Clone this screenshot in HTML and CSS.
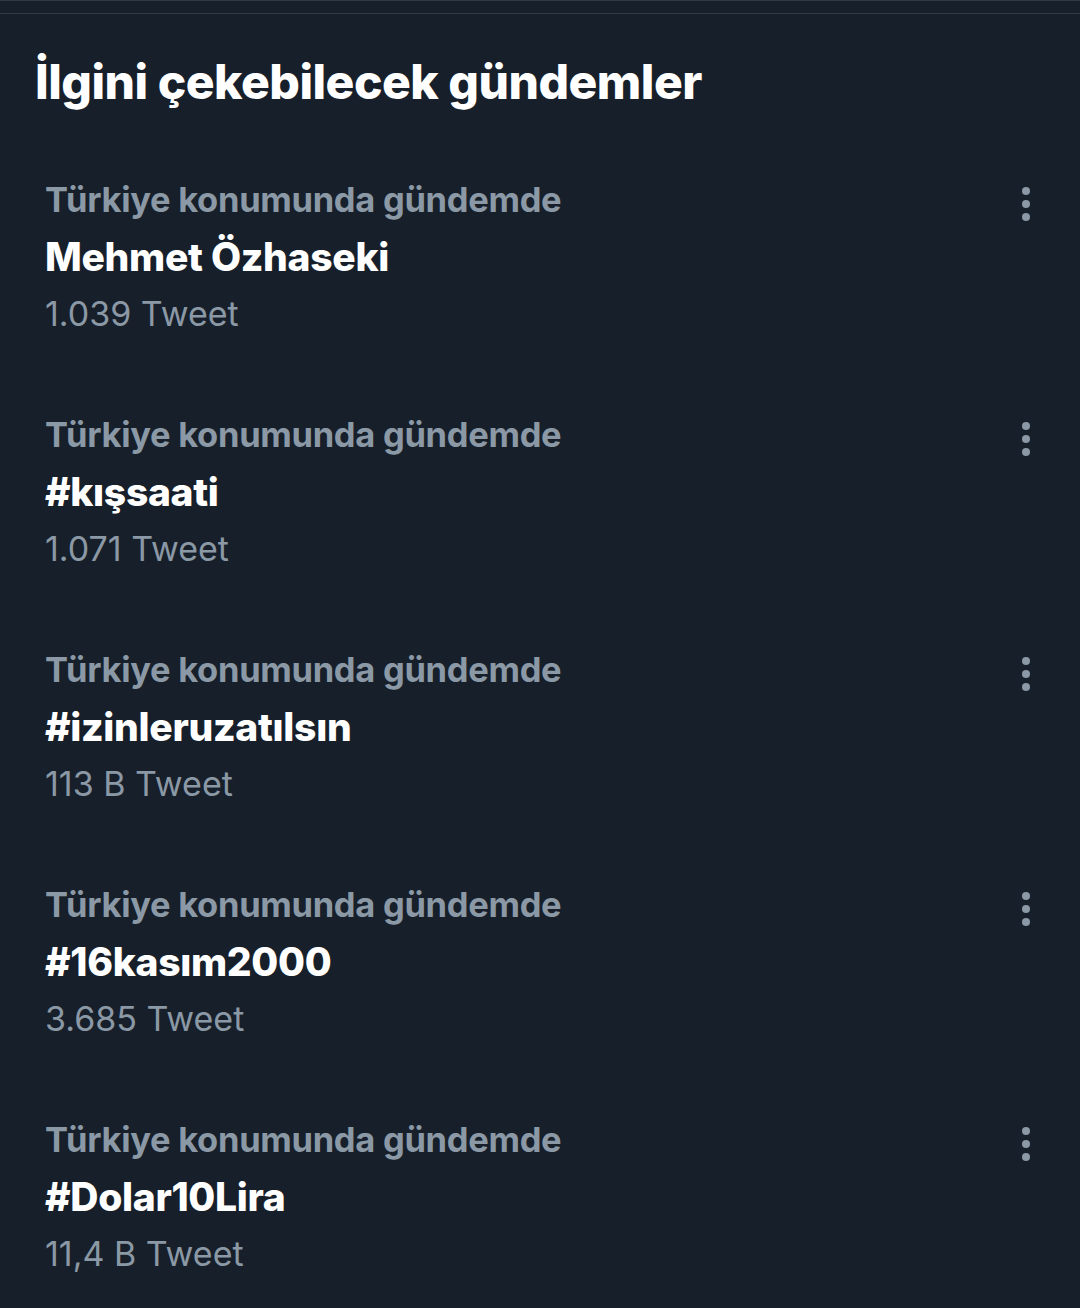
FILE: index.html
```html
<!DOCTYPE html>
<html lang="tr">
<head>
  <meta charset="UTF-8">
  <meta name="viewport" content="width=device-width, initial-scale=1.0">
  <title>Gündemler</title>
  <link rel="stylesheet" href="styles.css">
</head>
<body>
  <main class="panel">
    <div class="topbar"></div>
    <h1 class="title">İlgini çekebilecek gündemler</h1>

    <ul class="trends">
      <li class="trend">
        <div class="trend-text">
          <p class="trend-where">Türkiye konumunda gündemde</p>
          <p class="trend-name">Mehmet Özhaseki</p>
          <p class="trend-count">1.039 Tweet</p>
        </div>
        <button class="more" aria-label="Daha fazla"><span></span><span></span><span></span></button>
      </li>
      <li class="trend">
        <div class="trend-text">
          <p class="trend-where">Türkiye konumunda gündemde</p>
          <p class="trend-name">#kışsaati</p>
          <p class="trend-count">1.071 Tweet</p>
        </div>
        <button class="more" aria-label="Daha fazla"><span></span><span></span><span></span></button>
      </li>
      <li class="trend">
        <div class="trend-text">
          <p class="trend-where">Türkiye konumunda gündemde</p>
          <p class="trend-name">#izinleruzatılsın</p>
          <p class="trend-count">113 B Tweet</p>
        </div>
        <button class="more" aria-label="Daha fazla"><span></span><span></span><span></span></button>
      </li>
      <li class="trend">
        <div class="trend-text">
          <p class="trend-where">Türkiye konumunda gündemde</p>
          <p class="trend-name">#16kasım2000</p>
          <p class="trend-count">3.685 Tweet</p>
        </div>
        <button class="more" aria-label="Daha fazla"><span></span><span></span><span></span></button>
      </li>
      <li class="trend">
        <div class="trend-text">
          <p class="trend-where">Türkiye konumunda gündemde</p>
          <p class="trend-name">#Dolar10Lira</p>
          <p class="trend-count">11,4 B Tweet</p>
        </div>
        <button class="more" aria-label="Daha fazla"><span></span><span></span><span></span></button>
      </li>
    </ul>
  </main>
</body>
</html>
```

FILE: styles.css
```css
:root {
  --clr-bg: #17202a;
  --clr-line: #2f3a44;
  --clr-text: #ffffff;
  --clr-muted: #8b98a5;
}

* {
  padding: 0;
  margin: 0;
  box-sizing: border-box;
}

html, body {
  height: 100%;
}

body {
  background-color: var(--clr-bg);
  color: var(--clr-text);
  font-family: Inter, "Liberation Sans", sans-serif;
}

.panel {
  min-height: 100%;
}

.topbar {
  height: 14px;
  border-top: 1px solid var(--clr-line);
  border-bottom: 1px solid var(--clr-line);
}

.title {
  font-size: 48px;
  font-weight: 800;
  line-height: 1;
  padding: 44px 0 0 35px;
  letter-spacing: -0.5px;
}

.trends {
  list-style: none;
  padding-top: 65px;
}

.trend {
  display: flex;
  justify-content: space-between;
  align-items: flex-start;
  padding: 0 40px 0 45px;
  height: 235px;
}

.trend-text p {
  line-height: 57px;
  white-space: nowrap;
}

.trend-where {
  font-size: 34.5px;
  font-weight: 700;
  color: var(--clr-muted);
  letter-spacing: -0.3px;
}

.trend-name {
  font-size: 39px;
  font-weight: 800;
  letter-spacing: -0.3px;
}

.trend-count {
  font-size: 34px;
  font-weight: 400;
  color: var(--clr-muted);
}

.more {
  background: none;
  border: 0;
  display: flex;
  flex-direction: column;
  align-items: center;
  gap: 5px;
  padding: 12px 10px;
  margin-top: 4px;
}

.more span {
  width: 8px;
  height: 8px;
  border-radius: 50%;
  background-color: var(--clr-muted);
}
```
